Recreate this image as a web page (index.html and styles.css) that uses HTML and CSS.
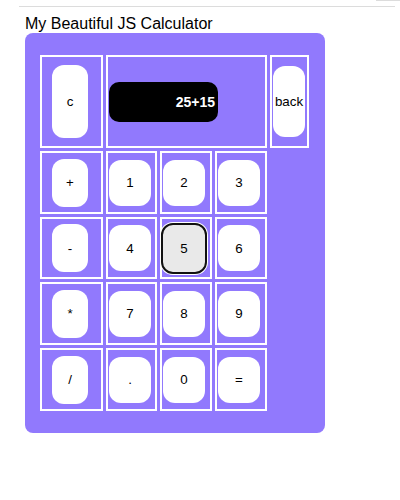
FILE: index.html
```html
<!DOCTYPE html>
<html>
<head>
<meta charset="utf-8">
<link rel="stylesheet" href="styles.css">
</head>
<body>
<div class="line-top"></div>
<div class="line-rule"></div>
<div class="title">My Beautiful JS Calculator</div>
<div class="calc">
  <table class="grid">
    <tr class="row-top">
      <td class="c1"><button class="btn clear">c</button></td>
      <td colspan="3" class="display-cell"><div class="screen">25+15</div></td>
      <td class="c5"><button class="btn back">back</button></td>
    </tr>
    <tr class="row">
      <td class="c1"><button class="btn op">+</button></td>
      <td class="c2"><button class="btn key">1</button></td>
      <td class="c3"><button class="btn key">2</button></td>
      <td class="c4"><button class="btn key">3</button></td>
    </tr>
    <tr class="row row-short">
      <td><button class="btn op">-</button></td>
      <td><button class="btn key">4</button></td>
      <td><button class="btn key hover">5</button></td>
      <td><button class="btn key">6</button></td>
    </tr>
    <tr class="row">
      <td><button class="btn op">*</button></td>
      <td><button class="btn key">7</button></td>
      <td><button class="btn key">8</button></td>
      <td><button class="btn key">9</button></td>
    </tr>
    <tr class="row">
      <td><button class="btn op">/</button></td>
      <td><button class="btn key">.</button></td>
      <td><button class="btn key">0</button></td>
      <td><button class="btn key">=</button></td>
    </tr>
  </table>
</div>
</body>
</html>
```
FILE: styles.css
```css
html, body {
  margin: 0;
  padding: 0;
  background: #ffffff;
  font-family: "Liberation Sans", Arial, sans-serif;
  color: #000;
}

.line-top {
  margin-left: 376px;
  height: 5px;
  border-top: 1px solid #dcdcdc;
}

.line-rule {
  margin-left: 19px;
  width: 376px;
  border-top: 1px solid #dcdcdc;
}

.title {
  margin: 8px 0 0 25px;
  font-size: 16px;
  line-height: 18px;
}

.calc {
  margin-left: 25px;
  width: 300px;
  height: 400px;
  box-sizing: border-box;
  padding: 19px 12px;
  background: #9179fd;
  border-radius: 8px;
}

.grid {
  border-collapse: separate;
  border-spacing: 3px;
}

.grid td {
  border: 2px solid #ffffff;
  padding: 1px;
  vertical-align: middle;
  text-align: left;
}

.grid .c1 { width: 57px; }
.grid .c2 { width: 45px; }
.grid .c3 { width: 46px; }
.grid .c4 { width: 46px; }
.grid .c5 { width: 33px; }

.row-top { height: 93px; }
.row { height: 63px; }
.row-short { height: 62px; }

.screen {
  width: 109px;
  height: 40px;
  box-sizing: border-box;
  padding-right: 3px;
  background: #000;
  border-radius: 10px;
  color: #fff;
  font-weight: bold;
  font-size: 14px;
  line-height: 40px;
  text-align: right;
}

.btn {
  display: block;
  box-sizing: border-box;
  border: none;
  padding: 0;
  margin: 0;
  background: #ffffff;
  border-radius: 12px;
  font-family: "Liberation Sans", Arial, sans-serif;
  font-size: 13.333px;
  color: #000;
  text-align: center;
}

.key {
  width: 42px;
  height: 46px;
}

.op {
  width: 36px;
  height: 48px;
  margin-left: 9px;
}

.clear {
  width: 36px;
  height: 73px;
  margin-left: 9px;
}

.back {
  width: 32px;
  height: 71px;
}

.key.hover {
  border: 2px solid #111;
  background: #e9e9e9;
  width: 46px;
  height: 51px;
  margin-left: -2px;
  box-shadow: 0 0 0 1px #ffffff;
}
```
